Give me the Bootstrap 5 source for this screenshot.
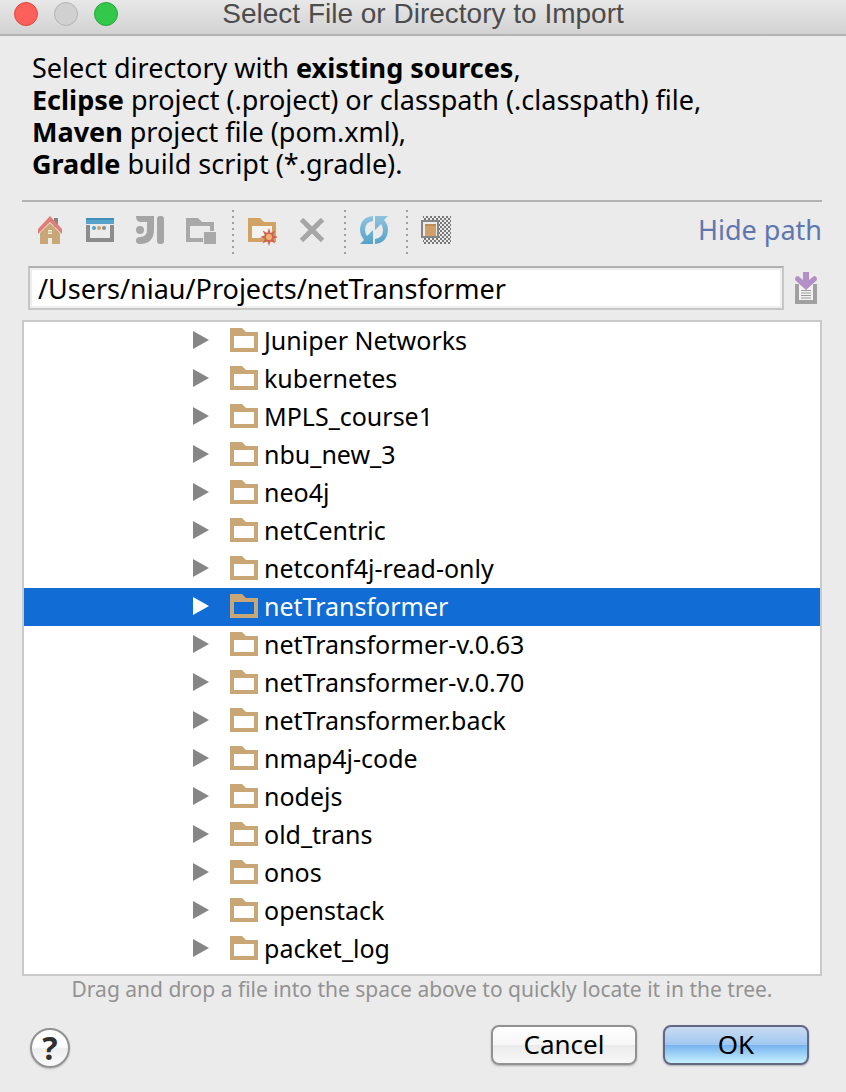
<!DOCTYPE html>
<html lang="en">
<head>
<meta charset="utf-8">
<meta name="viewport" content="width=device-width, initial-scale=1">
<title>Select File or Directory to Import</title>
<link rel="stylesheet" href="https://cdn.jsdelivr.net/npm/bootstrap@5.3.0/dist/css/bootstrap.min.css">
<style>
  body { background: #ebebeb; color: #000; font-family: "Noto Sans", "Open Sans", sans-serif; font-size: 27px; line-height: 32px; }
  .titlebar { height: 36px; padding: 0 14px 6px; background: linear-gradient(#e8e8e8, #d2d2d2); border-bottom: 2px solid #b3b3b3; }
  .titlebar h1 { font: 28px/32px "Liberation Sans", Arial, sans-serif; color: #4c4c4c; }
  .lights { gap: 16px; flex: 1 1 0; }
  .light { width: 24px; height: 24px; border-radius: 50%; border: 1px solid; padding: 0; }
  .light-close { background: #fc605b; border-color: #e14640; }
  .light-min { background: #d0d0d0; border-color: #b4b4b4; }
  .light-zoom { background: #34c84a; border-color: #24ab38; }
  .dialog-body { padding: 16px 24px 24px 22px; }
  .intro { padding: 0 10px 20px; border-bottom: 2px solid #b3b3b3; }
  .tools { padding: 8px 0 12px 12px; }
  .tool { border: 0; padding: 0; background: none; width: 32px; height: 32px; margin-bottom: 4px; display: block; flex: none; }
  .tool svg { display: block; overflow: visible; }
  .tool-group { gap: 18px; }
  .dots { width: 2px; height: 44px; margin: 0 12px 0 16px; background: repeating-linear-gradient(#a0a0a0 0 2px, transparent 2px 6px); }
  .hide-path { color: #5f76ae; text-decoration: none; line-height: 32px; margin-bottom: 4px; font-size: 27px; }
  .path-row { padding: 0 5px 10px 6px; gap: 11px; }
  .path-row .form-control { height: 44px; padding: 0 8px; border: 2px solid #c6c6c6; border-top-color: #b0b0b0; border-radius: 0; font-size: 27px; color: #000; box-shadow: inset 0 0 0 2px #eee; }
  .tree { background: #fff; border: 2px solid #c9c9c9; padding-bottom: 6px; font-size: 25px; }
  .tree-row { height: 38px; padding-left: 169px; color: #000; text-decoration: none; }
  .tree-row span { margin-bottom: 2px; }
  .twisty { width: 16px; height: 20px; fill: #868686; margin-bottom: 2px; }
  .folder { width: 28px; height: 24px; margin: 0 6px 2px 21px; fill: #c9a676; }
  .tree-row.active { background: #116cd6; color: #fff; }
  .tree-row.active .twisty { fill: #fff; }
  .hint { color: #929292; font-size: 21px; line-height: 26px; }
  .actions { padding: 23px 13px 0 8px; }
  .action-pair { gap: 26px; }
  .btn-mac { width: 146px; height: 40px; padding: 0; border: 2px solid #919191; border-radius: 8px; font-size: 26px; line-height: 32px; padding-bottom: 3px; color: #000; background: linear-gradient(#fff, #f6f6f6 49%, #ebebeb 51%, #f7f7f7); box-shadow: 0 1px 2px #0004; }
  .btn-mac-primary { border-color: #636783; background: linear-gradient(#c8dbf3, #a0c8f0 49%, #78b4ef 51%, #c6f0fc); }
  .help { width: 40px; height: 40px; margin-top: 3px; padding: 0; border: 2px solid #919191; border-radius: 50%; background: linear-gradient(#fff 48%, #ededed 52%, #fafafa); font-size: 32px; line-height: 34px; font-weight: 700; color: #303030; box-shadow: 0 1px 2px #0003; }
</style>
</head>
<body>
<header class="titlebar d-flex align-items-center">
  <div class="lights d-flex">
    <button class="light light-close" aria-label="Close"></button>
    <button class="light light-min" aria-label="Minimize" disabled></button>
    <button class="light light-zoom" aria-label="Zoom"></button>
  </div>
  <h1 class="m-0 text-nowrap">Select File or Directory to Import</h1>
  <div class="lights"></div>
</header>

<main class="dialog-body">
  <p class="intro m-0">Select directory with <b>existing sources</b>,<br><b>Eclipse</b> project (.project) or classpath (.classpath) file,<br><b>Maven</b> project file (pom.xml),<br><b>Gradle</b> build script (*.gradle).</p>

  <div class="tools d-flex align-items-center">
    <div class="tool-group d-flex">
      <button class="tool" aria-label="Home"><svg width="32" height="32" viewBox="0 0 32 32">
        <path d="M20 4h4v9h-4z" fill="#858585"/>
        <path d="M6 19 16 9l10 10v11h-8v-6h-4v6H6z" fill="#c9a676"/>
        <path d="M14 16h4v4h-4z" fill="#f7f0e6"/><path d="M14 18h4" stroke="#c9a676"/>
        <path d="M16 2 28 15v5L16 8 4 20v-5z" fill="#e07d76"/></svg></button>
      <button class="tool" aria-label="Desktop"><svg width="32" height="32" viewBox="0 0 32 32">
        <path d="M2 4h28v6H2z" fill="#57a3cb"/><path d="M2 4h28v2H2z" fill="#408db8"/>
        <path d="M2 11h4v13h20V11h4v17H2z" fill="#8c8c8c"/>
        <circle cx="10" cy="14" r="2" fill="#4ca3cc"/><circle cx="15" cy="14" r="2" fill="#d4a060"/><circle cx="20" cy="14" r="2" fill="#8a8a8a"/></svg></button>
      <button class="tool" aria-label="Project directory"><svg width="32" height="32" viewBox="0 0 32 32" fill="#a5a5a5">
        <path d="M2 2h18v13Q20 30 6 30 2 30 2 26.500T6 23q7 0 7-7V8H7Q2 8 2 2z"/>
        <circle cx="6" cy="16" r="4"/><rect x="23" y="2" width="7" height="28" rx="3"/></svg></button>
      <button class="tool" aria-label="Module directory"><svg width="32" height="32" viewBox="0 0 32 32" fill="#a9a9a9">
        <path fill-rule="evenodd" d="M2 4h12l4 4h12v9H19v11H2zM6 12v12h13v-7h7v-5z"/><path d="M20 18h12v12H20z"/></svg></button>
    </div>
    <span class="dots"></span>
    <div class="tool-group d-flex">
      <button class="tool" aria-label="New folder"><svg width="32" height="32" viewBox="0 0 32 32">
        <path fill="#d0a264" fill-rule="evenodd" d="M2 4h12l4 4h12v20H2zM6 12v12h20V12z"/><path d="M6 12h20v12H6z" fill="#f4f2ef"/>
        <path fill="#cf6353" d="m23 14 1.700 4.900 4.700-2.300-2.300 4.700L32 23l-4.900 1.700 2.300 4.700-4.700-2.300L23 32l-1.700-4.900-4.700 2.300 2.300-4.700L14 23l4.900-1.700-2.300-4.700 4.700 2.300z"/>
        <circle cx="23" cy="23" r="3" fill="#f3b372"/></svg></button>
      <button class="tool" aria-label="Delete"><svg width="32" height="32" viewBox="0 0 32 32"><path d="m5.500 5.500 21 21m0-21-21 21" stroke="#a6a6a6" stroke-width="5"/></svg></button>
    </div>
    <span class="dots"></span>
    <button class="tool" aria-label="Refresh"><svg width="32" height="32" viewBox="0 0 32 32">
      <defs><linearGradient id="blue" x2="0" y2="1"><stop stop-color="#8fc3de"/><stop offset="1" stop-color="#55a2c9"/></linearGradient></defs>
      <path fill="url(#blue)" d="M15 2v5Q7 8 7 16q0 3 2 6l6-6v14H2l4-4q-4-5-4-11Q3 3 15 2zM17 2h13l-4 4q4 4 4 10-1 13-13 14v-5q8-1 8-9 0-3-2-6l-6 6z"/></svg></button>
    <span class="dots"></span>
    <button class="tool" aria-label="Show hidden files"><svg width="32" height="32" viewBox="0 0 32 32">
      <defs><pattern id="check" width="4" height="4" patternUnits="userSpaceOnUse"><path d="M0 0h2v2H0zM2 2h2v2H2z" fill="#777"/></pattern></defs>
      <path d="M3 2h28v28H3z" fill="url(#check)"/><path d="M2 7h16v16H2z" fill="#ebebeb" stroke="#858585" stroke-width="2"/><path d="M5 10h11v12H5z" fill="#d0a068"/><path d="M5 10h11v2H5z" fill="#bd8d54"/></svg></button>
    <a href="#path" class="hide-path ms-auto">Hide path</a>
  </div>

  <div class="path-row d-flex align-items-center">
    <input id="path" class="form-control" type="text" aria-label="Path" value="/Users/niau/Projects/netTransformer">
    <button class="tool m-0 w-auto" aria-label="Recent paths"><svg width="22" height="32" viewBox="0 0 22 32">
      <path d="M0 12h22v20H0z" fill="#a0a0a0"/><path d="M4 12h14v16H4z" fill="#f2f2f2"/>
      <path d="M6 18.500h10M6 21h10M6 23.500h10M6 26h10" stroke="#999"/>
      <path d="M8 0h6v8l5-4q3 0 3 4L11 18 0 8q0-4 3-4l5 4z" fill="#b48ec6"/></svg></button>
  </div>

  <nav class="tree" id="tree" aria-label="Directories"></nav>
  <p class="hint text-center m-0">Drag and drop a file into the space above to quickly locate it in the tree.</p>

  <div class="actions d-flex align-items-start">
    <button class="help me-auto" aria-label="Help">?</button>
    <div class="action-pair d-flex">
      <button class="btn btn-mac">Cancel</button>
      <button class="btn btn-mac btn-mac-primary">OK</button>
    </div>
  </div>
</main>
<script>
  const names = ["Juniper Networks", "kubernetes", "MPLS_course1", "nbu_new_3", "neo4j", "netCentric", "netconf4j-read-only", "netTransformer", "netTransformer-v.0.63", "netTransformer-v.0.70", "netTransformer.back", "nmap4j-code", "nodejs", "old_trans", "onos", "openstack", "packet_log"];
  document.getElementById("tree").innerHTML = names.map(n =>
    `<a href="#" class="tree-row d-flex align-items-center${n === "netTransformer" ? " active" : ""}">
      <svg class="twisty" viewBox="0 0 16 20"><path d="M0 1v18l16-9z"/></svg>
      <svg class="folder" viewBox="0 0 28 24"><path fill-rule="evenodd" d="M0 0h12l4 4h12v20H0zM4 8v12h20V8z"/></svg><span>${n}</span></a>`).join("");
</script>
<script src="https://cdn.jsdelivr.net/npm/bootstrap@5.3.0/dist/js/bootstrap.bundle.min.js"></script>
</body>
</html>
